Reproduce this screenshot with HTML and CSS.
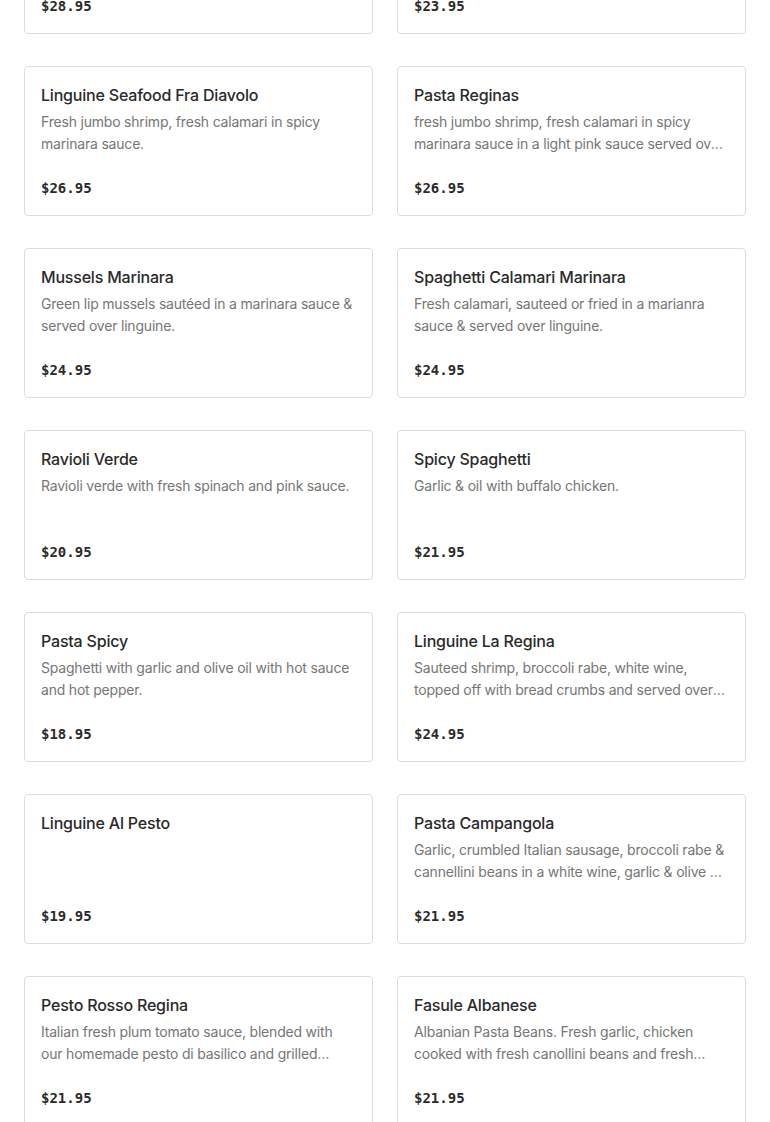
FILE: index.html
```html
<!DOCTYPE html>
<html>
<head>
<meta charset="utf-8">
<link rel="stylesheet" href="styles.css">
</head>
<body>
<div class="menu">
  <div class="card"><h3 class="title">Linguine Frutti di Mare</h3><p class="desc">Shrimp, clams, mussels and calamari in a marinara sauce over linguine.</p><div class="price">$28.95</div></div>
  <div class="card"><h3 class="title">Shrimp Scampi</h3><p class="desc">Jumbo shrimp sautéed in garlic, white wine and lemon butter sauce.</p><div class="price">$23.95</div></div>

  <div class="card"><h3 class="title">Linguine Seafood Fra Diavolo</h3><p class="desc">Fresh jumbo shrimp, fresh calamari in spicy marinara sauce.</p><div class="price">$26.95</div></div>
  <div class="card"><h3 class="title">Pasta Reginas</h3><p class="desc">fresh jumbo shrimp, fresh calamari in spicy marinara sauce in a light pink sauce served over linguine.</p><div class="price">$26.95</div></div>

  <div class="card"><h3 class="title">Mussels Marinara</h3><p class="desc">Green lip mussels sautéed in a marinara sauce &amp; served over linguine.</p><div class="price">$24.95</div></div>
  <div class="card"><h3 class="title">Spaghetti Calamari Marinara</h3><p class="desc">Fresh calamari, sauteed or fried in a marianra sauce &amp; served over linguine.</p><div class="price">$24.95</div></div>

  <div class="card"><h3 class="title">Ravioli Verde</h3><p class="desc">Ravioli verde with fresh spinach and pink sauce.</p><div class="price">$20.95</div></div>
  <div class="card"><h3 class="title">Spicy Spaghetti</h3><p class="desc">Garlic &amp; oil with buffalo chicken.</p><div class="price">$21.95</div></div>

  <div class="card"><h3 class="title">Pasta Spicy</h3><p class="desc">Spaghetti with garlic and olive oil with hot sauce and hot pepper.</p><div class="price">$18.95</div></div>
  <div class="card"><h3 class="title">Linguine La Regina</h3><p class="desc">Sauteed shrimp, broccoli rabe, white wine, topped off with bread crumbs and served over linguine.</p><div class="price">$24.95</div></div>

  <div class="card"><h3 class="title">Linguine Al Pesto</h3><p class="desc"></p><div class="price">$19.95</div></div>
  <div class="card"><h3 class="title">Pasta Campangola</h3><p class="desc">Garlic, crumbled Italian sausage, broccoli rabe &amp; cannellini beans in a white wine, garlic &amp; olive oil sauce.</p><div class="price">$21.95</div></div>

  <div class="card"><h3 class="title">Pesto Rosso Regina</h3><p class="desc">Italian fresh plum tomato sauce, blended with our homemade pesto di basilico and grilled chicken.</p><div class="price">$21.95</div></div>
  <div class="card"><h3 class="title">Fasule Albanese</h3><p class="desc">Albanian Pasta Beans. Fresh garlic, chicken cooked with fresh canollini beans and fresh spinach.</p><div class="price">$21.95</div></div>
</div>
</body>
</html>
```
FILE: styles.css
```css
html, body {
  margin: 0;
  padding: 0;
  background: #fff;
  overflow: hidden;
}
body {
  font-family: "Inter", "Noto Sans", sans-serif;
}
.menu {
  display: grid;
  grid-template-columns: 349px 349px;
  column-gap: 24px;
  row-gap: 32px;
  padding: 0 24px;
  margin-top: -116px;
}
.card {
  box-sizing: border-box;
  height: 150px;
  border: 1px solid #dcdcdc;
  border-radius: 4px;
  padding: 16px 16px 17px;
  display: flex;
  flex-direction: column;
  background: #fff;
}
.title {
  margin: 0;
  font-size: 16px;
  line-height: 24px;
  font-weight: 500;
  color: #2a2a2a;
  letter-spacing: -0.2px;
}
.desc {
  margin: 4px 0 0;
  font-size: 14px;
  line-height: 22px;
  color: #767676;
  letter-spacing: -0.2px;
  height: 44px;
  overflow: hidden;
  display: -webkit-box;
  -webkit-line-clamp: 2;
  -webkit-box-orient: vertical;
}
.price {
  margin-top: 23px;
  font-family: "DejaVu Sans Mono", "Liberation Mono", monospace;
  font-weight: bold;
  font-size: 14px;
  line-height: 20px;
  color: #2a2a2a;
}
```
